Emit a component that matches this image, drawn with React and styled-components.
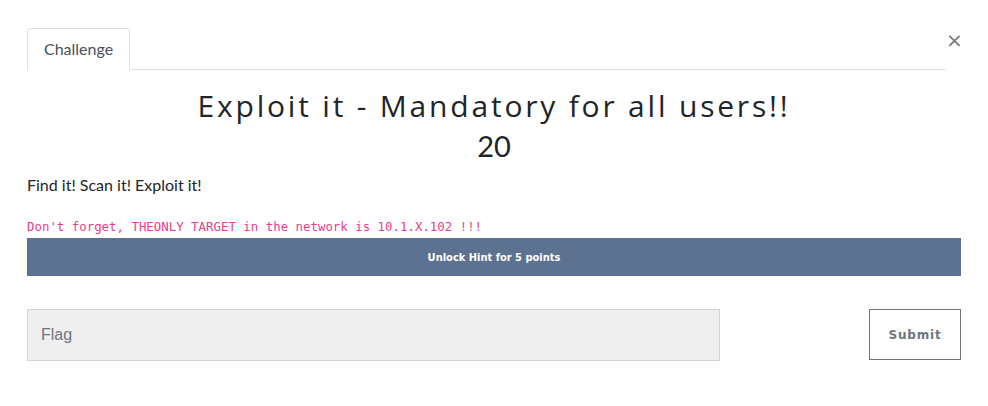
import React from 'react'
import styled, { createGlobalStyle } from 'styled-components'

const Global = createGlobalStyle`
body {
  margin: 0;
  background: #fff;
  font-family: Lato, "Liberation Sans", sans-serif;
  color: #212529;
}
`

const Modal = styled.div`
padding: 28px 27px 0 27px;
width: 934px;
`

const Header = styled.div`
display: grid;
grid-template-columns: 1fr 15px;
`

const Nav = styled.div`
display: flex;
border-bottom: 1px solid #dee2e6;
`

const Tab = styled.div`
padding: 11px 16px;
margin-bottom: -1px;
border: 1px solid #dee2e6;
border-bottom-color: #fff;
border-radius: 4px 4px 0 0;
font-size: 16px;
line-height: 18px;
color: #495057;
`

const Close = styled.div`
font-family: "DejaVu Sans", sans-serif;
font-size: 20px;
line-height: 20px;
color: #777;
text-align: center;
margin-top: 2px;
`

const Title = styled.h3`
margin: 17px 0 0;
text-align: center;
font-family: "Open Sans", Lato, sans-serif;
font-weight: 400;
font-size: 30px;
line-height: 38px;
letter-spacing: 2.8px;
color: #212529;
`

const Value = styled.h4`
margin: 2px 0 0;
text-align: center;
font-weight: 400;
font-size: 29px;
line-height: 38px;
color: #212529;
`

const Description = styled.p`
margin: 8px 0 0;
font-size: 16px;
line-height: 24px;
`

const Code = styled.code`
display: block;
margin-top: 22px;
font-family: "DejaVu Sans Mono", monospace;
font-size: 12.4px;
line-height: 16px;
color: #e83e8c;
`

const HintButton = styled.button`
display: block;
width: 100%;
height: 38px;
margin-top: 3px;
border: none;
background: #5c7290;
color: #fff;
font-family: "DejaVu Sans Condensed", "DejaVu Sans", sans-serif;
font-weight: bold;
font-size: 11px;
`

const Form = styled.div`
display: flex;
justify-content: space-between;
margin-top: 33px;
`

const FlagInput = styled.input`
box-sizing: border-box;
width: 693px;
height: 52px;
padding: 0 13px;
background: #efefef;
border: 1px solid #d2d4d6;
font-family: "Liberation Sans", Arial, sans-serif;
font-size: 16px;
color: #495057;
&::placeholder {
  color: #6c757d;
}
`

const SubmitButton = styled.button`
box-sizing: border-box;
width: 92px;
height: 51px;
background: #fff;
border: 1px solid #6c757d;
color: #6c757d;
font-family: "DejaVu Sans", sans-serif;
font-weight: bold;
font-size: 12px;
letter-spacing: 0.8px;
`

const App = () => {
  return (
    <Modal>
      <Global />
      <Header>
        <Nav>
          <Tab>Challenge</Tab>
        </Nav>
        <Close>×</Close>
      </Header>
      <Title>Exploit it - Mandatory for all users!!</Title>
      <Value>20</Value>
      <Description>Find it! Scan it! Exploit it!</Description>
      <Code>Don't forget, THEONLY TARGET in the network is 10.1.X.102 !!!</Code>
      <HintButton>Unlock Hint for 5 points</HintButton>
      <Form>
        <FlagInput placeholder="Flag" />
        <SubmitButton>Submit</SubmitButton>
      </Form>
    </Modal>
  )
}

export default App
